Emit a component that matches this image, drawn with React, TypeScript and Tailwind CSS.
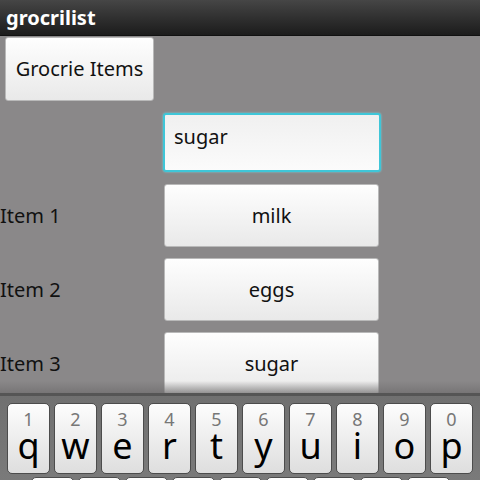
const KEYS = [
  ['1', 'q'],
  ['2', 'w'],
  ['3', 'e'],
  ['4', 'r'],
  ['5', 't'],
  ['6', 'y'],
  ['7', 'u'],
  ['8', 'i'],
  ['9', 'o'],
  ['0', 'p'],
];

const ITEMS = [
  { label: 'Item 1', value: 'milk' },
  { label: 'Item 2', value: 'eggs' },
  { label: 'Item 3', value: 'sugar' },
];

const font = "font-['Noto_Sans','Open_Sans',sans-serif]";

function WhiteButton({ children, className }: { children: React.ReactNode; className?: string }) {
  return (
    <div
      className={`flex items-center justify-center rounded-[3px] border border-[#b9b9b9] bg-gradient-to-b from-[#fefefe] to-[#e9e9e9] text-[20px] text-[#111] ${className ?? ''}`}
    >
      {children}
    </div>
  );
}

export default function App() {
  return (
    <div className={`flex h-[480px] w-[480px] flex-col overflow-hidden bg-[#8a8889] ${font}`}>
      {/* title bar */}
      <div className="flex h-[36px] shrink-0 items-center border-b border-[#111] bg-gradient-to-b from-[#464646] to-[#1c1c1c] pl-[6px]">
        <span className="text-[20px] font-bold leading-none text-white">grocrilist</span>
      </div>

      {/* content */}
      <div className="relative flex min-h-0 flex-1 flex-col overflow-hidden">
        <WhiteButton className="ml-[5px] mt-[1px] h-[64px] w-[149px] shrink-0">Grocrie Items</WhiteButton>

        <div className="ml-[163px] mt-[12px] flex h-[59px] w-[218px] shrink-0 items-start rounded-[3px] border-2 border-[#3fc6d8] bg-gradient-to-b from-[#f0f0f0] to-[#fbfbfb] pl-[9px] pt-[7px] text-[20px] text-[#111] shadow-[0_0_2px_#6fe0ef]">
          sugar
        </div>

        <div className="mt-[12px] flex shrink-0 flex-col gap-[11px]">
          {ITEMS.map((item) => (
            <div key={item.label} className="flex h-[63px] items-center">
              <span className="w-[164px] shrink-0 text-[20px] text-[#111]">{item.label}</span>
              <WhiteButton className="h-full w-[215px]">{item.value}</WhiteButton>
            </div>
          ))}
        </div>

        <div className="pointer-events-none absolute bottom-0 left-0 h-[12px] w-full bg-gradient-to-b from-transparent to-[#6f6d6e]/70" />
      </div>

      {/* keyboard */}
      <div className="h-[87px] shrink-0 border-t-[3px] border-[#555] bg-gradient-to-b from-[#707070] to-[#7a7a7a] pl-[7px] pt-[7px]">
        <div className="flex gap-[4px]">
          {KEYS.map(([num, letter]) => (
            <div
              key={letter}
              className="flex h-[71px] w-[43px] shrink-0 flex-col items-center rounded-[5px] border border-[#4c4c4c] bg-gradient-to-b from-[#fdfdfd] to-[#dedede]"
            >
              <span className="mt-[6px] text-[18px] leading-[18px] text-[#777]">{num}</span>
              <span className="text-[36px] leading-[36px] text-black">{letter}</span>
            </div>
          ))}
        </div>
        <div className="mt-[3px] flex gap-[4px] pl-[24px]">
          {['a', 's', 'd', 'f', 'g', 'h', 'j', 'k', 'l'].map((k) => (
            <div key={k} className="h-[20px] w-[43px] shrink-0 rounded-[5px] border border-[#4c4c4c] bg-[#fdfdfd]" />
          ))}
        </div>
      </div>
    </div>
  );
}
